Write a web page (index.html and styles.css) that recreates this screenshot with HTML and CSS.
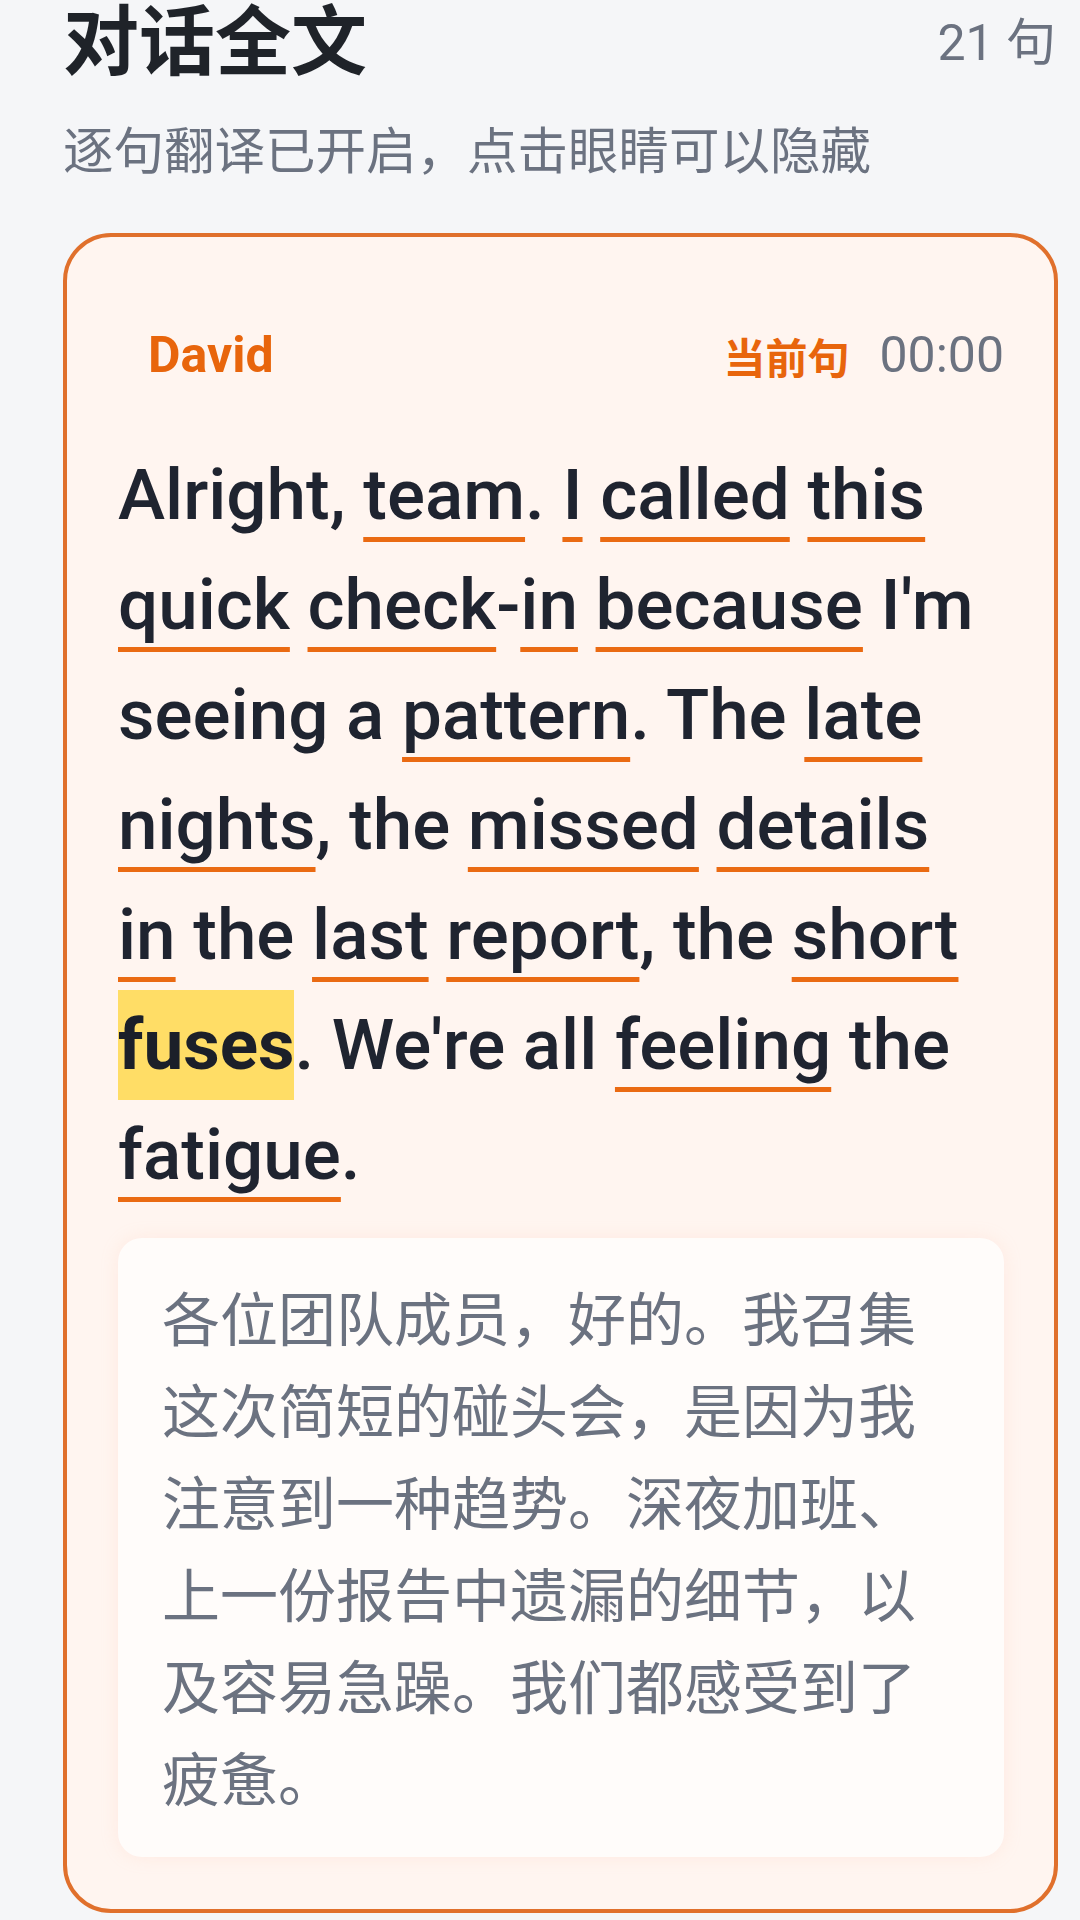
FILE: index.html
```html
<!DOCTYPE html>
<html lang="zh-CN">
<head>
<meta charset="utf-8">
<title>对话全文</title>
<link rel="stylesheet" href="styles.css">
</head>
<body>
<div class="page">
  <header class="top">
    <div class="title-row">
      <h1 class="title">对话全文</h1>
      <span class="count">21 句</span>
    </div>
    <p class="subtitle">逐句翻译已开启，点击眼睛可以隐藏</p>
  </header>

  <section class="card">
    <div class="card-head">
      <span class="speaker">David</span>
      <div class="meta">
        <span class="current">当前句</span>
        <span class="time">00:00</span>
      </div>
    </div>
    <p class="sentence">Alright, <span class="w">team</span>. <span class="w">I</span> <span class="w">called</span> <span class="w">this</span> <span class="w">quick</span> <span class="w">check</span>-<span class="w">in</span> <span class="w">because</span> I'm seeing a <span class="w">pattern</span>. The <span class="w">late</span> <span class="w">nights</span>, the <span class="w">missed</span> <span class="w">details</span> <span class="w">in</span> the <span class="w">last</span> <span class="w">report</span>, the <span class="w">short</span> <span class="hl">fuses</span>. We're all <span class="w">feeling</span> the <span class="w">fatigue</span>.</p>
    <div class="translation">各位团队成员，好的。我召集这次简短的碰头会，是因为我注意到一种趋势。深夜加班、上一份报告中遗漏的细节，以及容易急躁。我们都感受到了疲惫。</div>
  </section>
</div>
</body>
</html>
```

FILE: styles.css
```css
* {
  box-sizing: border-box;
}

html, body {
  margin: 0;
  padding: 0;
}

body {
  background: #f5f6f8;
  font-family: "Roboto", "Noto Sans CJK SC", sans-serif;
  color: #1f2430;
  width: 1080px;
  height: 1920px;
  overflow: hidden;
}

.page {
  padding: 0 22px 0 63px;
}

.title-row {
  display: flex;
  justify-content: space-between;
  align-items: center;
  height: 84px;
  padding-top: 2px;
}

.title {
  margin: 0;
  font-size: 76px;
  line-height: 82px;
  font-weight: 700;
  color: #1f2329;
}

.count {
  font-size: 50px;
  line-height: 60px;
  color: #6b7280;
  padding-right: 2px;
}

.subtitle {
  margin: 33px 0 0;
  font-size: 50.5px;
  line-height: 70px;
  color: #6b7280;
}

.card {
  margin-top: 46px;
  border: 4px solid #e0702c;
  border-radius: 48px;
  background: #fff5f0;
  padding: 88px 50px 52px 51px;
}

.card-head {
  display: flex;
  justify-content: space-between;
  align-items: center;
  height: 60px;
  padding-left: 30px;
}

.speaker {
  font-size: 50px;
  font-weight: 700;
  color: #e8650c;
}

.meta {
  display: flex;
  align-items: center;
  gap: 30px;
}

.current {
  font-size: 42px;
  font-weight: 700;
  color: #e8650c;
}

.time {
  font-size: 50px;
  color: #6b7280;
}

.sentence {
  margin: 55px 14px 0 0;
  font-size: 71px;
  line-height: 110px;
  font-weight: 500;
  color: #1f2430;
}

.w {
  text-decoration: underline;
  text-decoration-color: #ea6a12;
  text-decoration-thickness: 5px;
  text-underline-offset: 18px;
  text-decoration-skip-ink: none;
}

.hl {
  display: inline-block;
  line-height: 110px;
  background: #ffdd66;
  font-weight: 700;
  color: #1b1f29;
}

.translation {
  margin-top: 28px;
  background: #fffcfa;
  border-radius: 24px;
  padding: 37px 44px 30px;
  font-size: 58px;
  line-height: 92px;
  color: #6b7280;
  box-shadow: 0 0 18px rgba(255, 190, 160, 0.18);
}
```
